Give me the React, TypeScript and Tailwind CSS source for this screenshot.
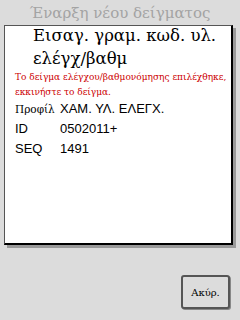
export default function App() {
  return (
    <div className="flex h-[320px] w-[240px] flex-col bg-[#dcdcdc] font-['DejaVu_Serif',serif]">
      <div className="flex h-[25px] items-center justify-center pt-[1px] text-[15px] leading-none text-[#a3a3a3]">
        Έναρξη νέου δείγματος
      </div>
      <div className="ml-[4px] flex h-[220px] w-[229px] flex-col border-t border-l border-r-2 border-b-2 border-t-[#555] border-l-[#555] border-r-black border-b-black bg-white shadow-[3px_3px_0_#9a9a9a]">
        <div className="-mt-[2px] pl-[28px] text-[16.5px] leading-[23px] text-black">
          <div>Εισαγ. γραμ. κωδ. υλ.</div>
          <div>ελέγχ/βαθμ</div>
        </div>
        <div className="pl-[10px] text-[9px] leading-[15px] text-[#cc0000]">
          <div>Το δείγμα ελέγχου/βαθμονόμησης επιλέχθηκε,</div>
          <div>εκκινήστε το δείγμα.</div>
        </div>
        <div className="-mt-[1px] flex flex-col pl-[10px] font-['Liberation_Sans',sans-serif] text-[13px] leading-[20px] text-black">
          {[
            ["Προφίλ", "ΧΑΜ. ΥΛ. ΕΛΕΓΧ."],
            ["ID", "0502011+"],
            ["SEQ", "1491"],
          ].map(([k, v]) => (
            <div key={k} className="flex">
              <span className={`w-[45px] ${k === "Προφίλ" ? "font-['DejaVu_Serif',serif] text-[10.5px]" : ""}`}>{k}</span>
              <span>{v}</span>
            </div>
          ))}
        </div>
      </div>
      <div className="flex flex-1 items-end justify-end pb-[11px] pr-[10px]">
        <div className="flex h-[34px] w-[49px] items-center justify-center rounded-[3px] border-2 border-[#555] bg-[#dcdcdc] text-[10px] text-black shadow-[1px_1px_0_#888]">
          Ακύρ.
        </div>
      </div>
    </div>
  );
}
